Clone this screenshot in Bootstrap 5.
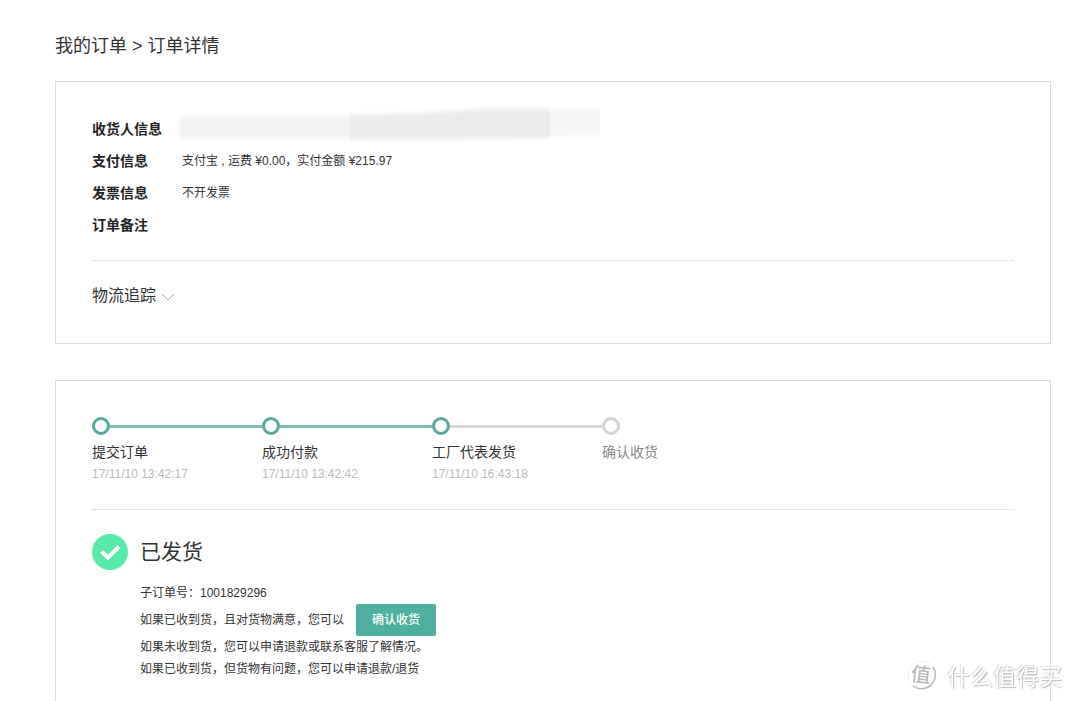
<!DOCTYPE html>
<html lang="zh-CN">
<head>
<meta charset="utf-8">
<meta name="viewport" content="width=device-width, initial-scale=1">
<title>订单详情</title>
<link href="https://cdn.jsdelivr.net/npm/bootstrap@5.3.0/dist/css/bootstrap.min.css" rel="stylesheet">
<style>
  body { font-family: "Liberation Sans", "Noto Sans CJK SC", sans-serif; font-size: 12px; line-height: 22px; color: #333; background: #fff; }
  .page { padding: 32px 23px 0 55px; }
  .crumb { font-size: 18px; line-height: 28px; margin-bottom: 21px; }
  .crumb a { color: inherit; text-decoration: none; }
  .panel { border: 1px solid #dcdcdc; padding: 31px 36px 35px; }
  .panel-steps { margin-top: 36px; padding: 36px 36px 20px; }
  .info dt { width: 90px; font-size: 14px; line-height: 32px; color: #222; }
  .info dd { line-height: 32px; }
  .divider { border-top: 1px dotted #ccc; }
  .panel-info .divider { margin: 19px 0 23px; }
  .track { font-size: 16px; line-height: 24px; color: #333; }
  .redacted { width: 424px; height: 36px; margin: -7px 0 -29px -6px; }
  .step { width: 170px; }
  .step-mark { height: 18px; }
  .dot { width: 18px; height: 18px; border: 3px solid #56a99b; border-radius: 50%; }
  .line { height: 3px; background: #7bc0b2; }
  .step-name { font-size: 14px; line-height: 22px; margin-top: 6px; }
  .step-time { color: #bbb; }
  .todo .dot { border-color: #d4d4d4; }
  .todo .step-name { color: #888; }
  .next-todo .line { background: #d6d6d6; }
  .status-title { font-size: 21px; line-height: 36px; }
  .confirm { width: 80px; height: 32px; margin-left: 12px; padding: 0; border: 0; border-radius: 2px; font-size: 12px; font-weight: 500; color: #fff; background: #50b0a0; }
  .confirm:hover { color: #fff; background: #459c8e; }
  .brand { right: 12px; bottom: 10px; font-family: "Noto Sans CJK SC", sans-serif; font-size: 23px; line-height: 32px; color: #fff; text-shadow: 1px 1px 1px #bbb, -1px -1px 1px #ddd; }
  .brand svg { text-shadow: none; margin-right: 9px; }
</style>
</head>
<body>
<main class="page min-vh-100 d-flex flex-column">
  <nav class="crumb" aria-label="breadcrumb"><a href="#">我的订单</a> &gt; <span>订单详情</span></nav>

  <section class="panel panel-info">
    <dl class="info mb-0">
      <div class="d-flex"><dt>收货人信息</dt><dd class="mb-0">
        <svg class="redacted d-block" viewBox="0 0 424 36" aria-hidden="true">
          <defs>
            <filter id="soft" x="-5%" y="-20%" width="110%" height="140%"><feGaussianBlur stdDeviation="2"/></filter>
            <clipPath id="mid"><path d="M174 0h200v36h-200z"/></clipPath>
            <clipPath id="tail"><path d="M374 0h50v36h-50z"/></clipPath>
          </defs>
          <rect x="3" y="11" width="190" height="21" rx="6" fill="#f1f1f1" filter="url(#soft)"/>
          <g clip-path="url(#mid)"><path filter="url(#soft)" d="M166 9l80-2 60-4h80v29l-120 1h-100z" fill="#ebebeb"/></g>
          <g clip-path="url(#tail)"><path filter="url(#soft)" d="M360 3h80v26l-30 1-50 2z" fill="#f5f5f5"/></g>
        </svg></dd></div>
      <div class="d-flex"><dt>支付信息</dt><dd class="mb-0">支付宝 , 运费 ¥0.00，实付金额 ¥215.97</dd></div>
      <div class="d-flex"><dt>发票信息</dt><dd class="mb-0">不开发票</dd></div>
      <div class="d-flex"><dt>订单备注</dt><dd class="mb-0"></dd></div>
    </dl>
    <div class="divider"></div>
    <button type="button" class="track btn p-0 border-0 d-flex align-items-center rounded-0">物流追踪
      <svg class="ms-1 mt-1" width="15" height="12" viewBox="0 0 15 12" fill="none" stroke="#aaa" aria-hidden="true"><path d="M2 2l6 6 6-6"/></svg>
    </button>
  </section>

  <section class="panel panel-steps border-bottom-0 flex-grow-1">
    <ol class="list-unstyled d-flex mb-0">
      <li class="step"><div class="step-mark d-flex align-items-center"><span class="dot"></span><span class="line flex-grow-1"></span></div><div class="step-name">提交订单</div><div class="step-time">17/11/10 13:42:17</div></li>
      <li class="step"><div class="step-mark d-flex align-items-center"><span class="dot"></span><span class="line flex-grow-1"></span></div><div class="step-name">成功付款</div><div class="step-time">17/11/10 13:42:42</div></li>
      <li class="step next-todo"><div class="step-mark d-flex align-items-center"><span class="dot"></span><span class="line flex-grow-1"></span></div><div class="step-name">工厂代表发货</div><div class="step-time">17/11/10 16:43:18</div></li>
      <li class="step todo"><div class="step-mark d-flex align-items-center"><span class="dot"></span></div><div class="step-name">确认收货</div></li>
    </ol>
    <div class="divider my-4"></div>
    <div class="d-flex">
      <svg class="flex-shrink-0" width="36" height="36" viewBox="0 0 36 36" aria-hidden="true"><circle cx="18" cy="18" r="18" fill="#58eaa9"/><path d="M9.500 17.500l6.500 6 11-11" fill="none" stroke="#fff" stroke-width="4"/></svg>
      <div class="ms-2 ps-1">
        <h1 class="status-title fw-normal mb-0">已发货</h1>
        <div class="mt-2 pt-1">子订单号：1001829296</div>
        <div class="d-flex align-items-center"><span>如果已收到货，且对货物满意，您可以</span><button type="button" class="confirm btn">确认收货</button></div>
        <div>如果未收到货，您可以申请退款或联系客服了解情况。</div>
        <div>如果已收到货，但货物有问题，您可以申请退款/退货</div>
      </div>
    </div>
  </section>
</main>
<div class="brand position-fixed d-flex align-items-center" aria-hidden="true">
  <svg width="32" height="32" viewBox="0 0 32 32"><circle cx="16" cy="16" r="14" fill="#fff" stroke="#eee"/><path d="M27 8a14 14 0 0 1-20 19" fill="none" stroke="#bbb" stroke-width="1.500"/><text x="15" y="23" text-anchor="middle" font-size="20" font-weight="500" fill="#b8b8b8" transform="rotate(6 16 16)">值</text></svg>
  <span>什么值得买</span>
</div>
<script src="https://cdn.jsdelivr.net/npm/bootstrap@5.3.0/dist/js/bootstrap.bundle.min.js"></script>
</body>
</html>
